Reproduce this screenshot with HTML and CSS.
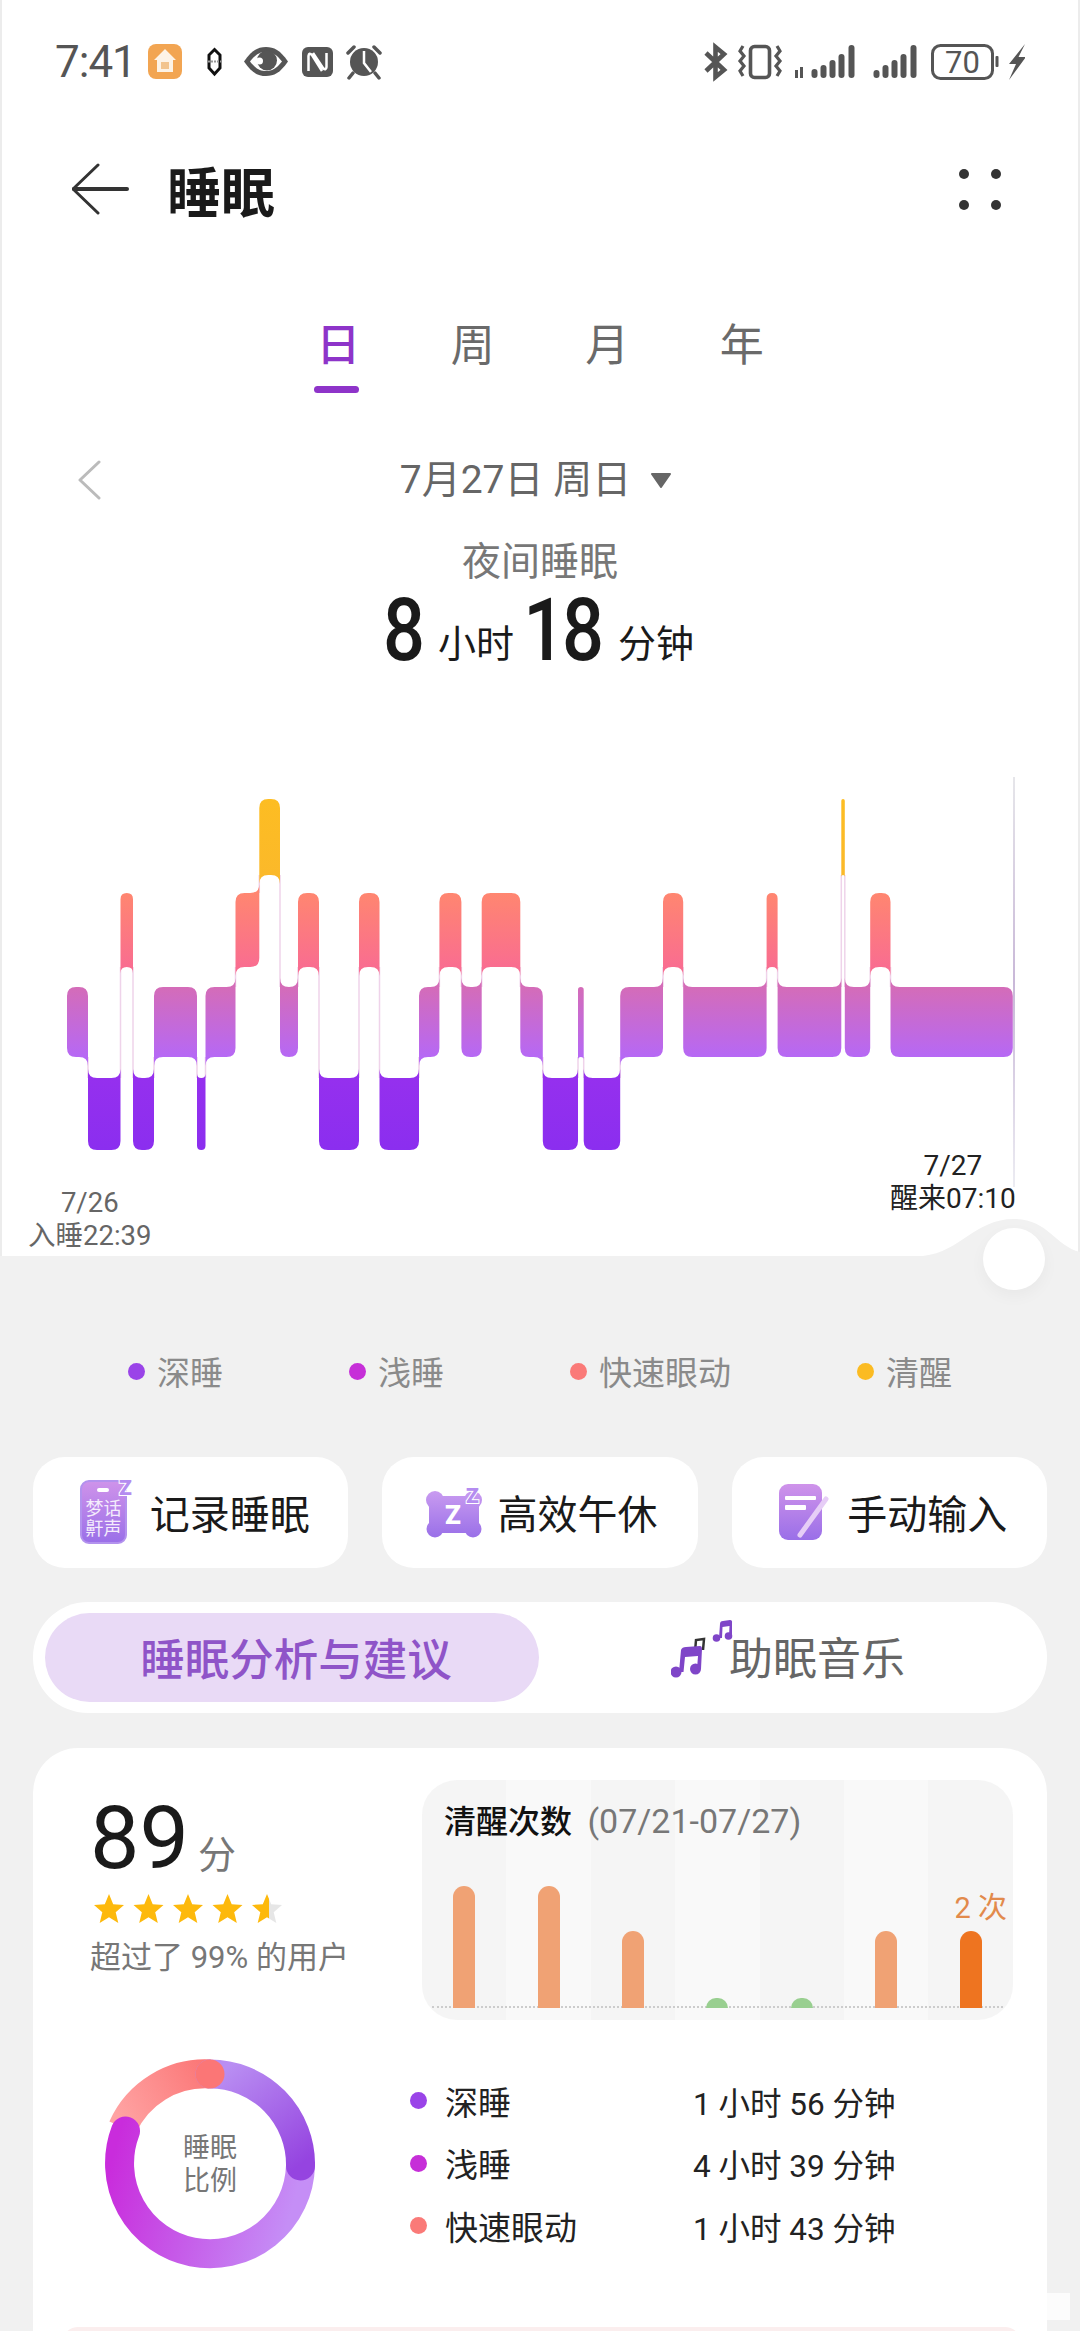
FILE: index.html
```html
<!DOCTYPE html>
<html lang="zh">

<head>
    <meta charset="utf-8">
    <title>睡眠</title>
    <link rel="stylesheet" href="styles.css">
</head>

<body>
    <div class="sheet">
        <div class="statusbar">
            <div class="status-left">
                <span class="clock">7:41</span>
                <svg class="status-icons-left" viewBox="148 40 234 44" width="234" height="44">
                    <!-- home app -->
                    <rect x="148" y="44" width="34" height="35" rx="8" fill="#f2a552" />
                    <path d="M165 49 L176 60 H173 V72 H157 V60 H154 Z" fill="#fdf3e6" />
                    <path d="M161 62 h8 v7 h-8 Z" fill="#f2c48e" />
                    <!-- link -->
                    <path d="M214.5 49.5 L220 55 V68 L214.5 74 L209 68 V55 Z" fill="#fff" stroke="#111" stroke-width="3" />
                    <path d="M208 61.5 H221" stroke="#999" stroke-width="2" stroke-dasharray="2 1" />
                    <!-- eye -->
                    <path d="M244 61.5 C252 50 258 47 266 47 C274 47 280 50 288 61.5 C280 73 274 76 266 76 C258 76 252 73 244 61.5Z" fill="#555" />
                    <path d="M250 61.5 C256 54 260 52 266 52 C272 52 276 54 282 61.5 C276 69 272 71 266 71 C260 71 256 69 250 61.5Z" fill="#fff" />
                    <circle cx="267" cy="60.5" r="10" fill="#555" />
                    <circle cx="259.5" cy="61" r="3.5" fill="#fff" />
                    <!-- nfc -->
                    <rect x="302" y="47" width="31" height="30" rx="6" fill="#555" />
                    <path d="M308.5 71 V56 Q309 52 312 55 L322 71 M313 53 L323 68 Q326 71 326.5 67 V53" fill="none" stroke="#fff" stroke-width="2.5" />
                    <!-- alarm -->
                    <circle cx="364" cy="62" r="14" fill="#555" />
                    <path d="M348 53 L354 47 M380 53 L374 47 M353 73 L349 78 M375 73 L379 78" stroke="#555" stroke-width="3.5" stroke-linecap="round" />
                    <path d="M364 51 V63 L371 72" fill="none" stroke="#fff" stroke-width="2.5" />
                </svg>
            </div>
            <svg class="status-icons-right" viewBox="704 40 321 44" width="321" height="44">
                <!-- bluetooth -->
                <path d="M706 53 L724 70 L715.5 77 V47 L724 54 L706 71" fill="none" stroke="#555" stroke-width="4.6" />
                <!-- vibrate -->
                <rect x="750.5" y="46.5" width="19" height="31" rx="4" fill="none" stroke="#555" stroke-width="3.6" />
                <path d="M743 46 L740 51 L744 56 L740 61 L744 66 L740 71 L743 76 M777 46 L780 51 L776 56 L780 61 L776 66 L780 71 L777 76" fill="none" stroke="#555" stroke-width="3.2" />
                <!-- signal 1 -->
                <g fill="#555">
                    <rect x="795" y="70" width="3" height="8" />
                    <rect x="800" y="67" width="3" height="11" />
                    <rect x="811.5" y="69" width="6" height="9" rx="3" />
                    <rect x="820.5" y="65" width="6" height="13" rx="3" />
                    <rect x="829.5" y="60" width="6" height="18" rx="3" />
                    <rect x="838.5" y="54" width="6" height="24" rx="3" />
                    <rect x="848.5" y="45" width="6" height="33" rx="3" />
                    <!-- signal 2 -->
                    <rect x="873.5" y="70" width="6" height="8" rx="3" />
                    <rect x="882.5" y="65" width="6" height="13" rx="3" />
                    <rect x="891.5" y="60" width="6" height="18" rx="3" />
                    <rect x="900.5" y="54" width="6" height="24" rx="3" />
                    <rect x="910.5" y="45" width="6" height="33" rx="3" />
                </g>
                <!-- battery -->
                <rect x="932.5" y="45.5" width="60" height="33" rx="8" fill="none" stroke="#555" stroke-width="3" />
                <text x="962.5" y="73" class="battery-text">70</text>
                <rect x="995.5" y="56" width="3" height="11" rx="1" fill="#555" />
                <path d="M1025 44 L1009 64 H1016 L1009 80 L1026 57 H1018.5 Z" fill="#555" />
            </svg>
        </div>

        <div class="appbar">
            <svg class="back-icon" viewBox="72 163 58 52" width="58" height="52">
                <path d="M98 165 L73 189 L98 213" fill="none" stroke="#333" stroke-width="3" stroke-linecap="round" stroke-linejoin="round" />
                <path d="M74 189 H127" stroke="#333" stroke-width="4" stroke-linecap="round" />
            </svg>
            <h1 class="page-title">睡眠</h1>
            <div class="more-dots"><i></i><i></i><i></i><i></i></div>
        </div>

        <div class="range-tabs">
            <div class="range-tab active">日</div>
            <div class="range-tab">周</div>
            <div class="range-tab">月</div>
            <div class="range-tab">年</div>
        </div>

        <div class="date-row">
            <svg class="date-prev" viewBox="0 0 26 40" width="26" height="40">
                <path d="M23 2 L4 20 L23 38" fill="none" stroke="#bbb" stroke-width="3" stroke-linecap="round" stroke-linejoin="round" />
            </svg>
            <div class="date-text">
                <span>7月27日 周日</span>
                <svg class="date-caret" viewBox="0 0 22 16" width="22" height="16">
                    <path d="M2 2 H20 L11 15 Z" fill="#666" stroke="#666" stroke-width="2" stroke-linejoin="round" />
                </svg>
            </div>
            <div></div>
        </div>

        <div class="summary-label">夜间睡眠</div>
        <div class="summary-value">
            <span class="dur-num">8</span><span class="dur-unit">小时</span><span class="dur-num dur-two">18</span><span class="dur-unit">分钟</span>
        </div>

        <div class="chart">
            <svg id="sleep-chart" class="chart-svg" viewBox="0 676 1080 580" width="1080" height="580">
                <defs>
                    <linearGradient id="lv-awake" gradientUnits="userSpaceOnUse" x1="0" y1="799" x2="0" y2="875">
                        <stop offset="0" stop-color="#fdbd22" />
                        <stop offset="1" stop-color="#fbb92a" />
                    </linearGradient>
                    <linearGradient id="lv-rem" gradientUnits="userSpaceOnUse" x1="0" y1="893" x2="0" y2="967">
                        <stop offset="0" stop-color="#ff8670" />
                        <stop offset="1" stop-color="#f96d90" />
                    </linearGradient>
                    <linearGradient id="lv-light" gradientUnits="userSpaceOnUse" x1="0" y1="987" x2="0" y2="1057">
                        <stop offset="0" stop-color="#d46cb8" />
                        <stop offset="1" stop-color="#b668f5" />
                    </linearGradient>
                    <linearGradient id="lv-deep" gradientUnits="userSpaceOnUse" x1="0" y1="1078" x2="0" y2="1150">
                        <stop offset="0" stop-color="#9530ee" />
                        <stop offset="1" stop-color="#8b2eef" />
                    </linearGradient>
                    <linearGradient id="axis-line" x1="0" y1="0" x2="0" y2="1">
                        <stop offset="0" stop-color="#e6e6ea" />
                        <stop offset=".5" stop-color="#c9b8d8" />
                        <stop offset="1" stop-color="#ececf2" />
                    </linearGradient>
                </defs>
                <rect x="1013" y="777" width="2" height="410" fill="url(#axis-line)" />
                <g id="sleep-blocks"></g>
                <path d="M915 1256.5 C960 1256 972 1219 1014 1219 C1048 1219 1055 1246 1080 1252 V1257 H915 Z" fill="#f1f1f1" />
            </svg>
            <div class="chart-label chart-start">7/26<br>入睡22:39</div>
            <div class="chart-label chart-end">7/27<br>醒来07:10</div>
            <div class="chart-thumb"></div>
        </div>
    </div>

    <div class="legend">
        <div class="legend-item"><i class="dot dot-deep"></i>深睡</div>
        <div class="legend-item"><i class="dot dot-light"></i>浅睡</div>
        <div class="legend-item"><i class="dot dot-rem"></i>快速眼动</div>
        <div class="legend-item"><i class="dot dot-awake"></i>清醒</div>
    </div>

    <div class="actions">
        <div class="action-btn action-record">
            <svg viewBox="80 1480 54 66" width="54" height="66">
                <defs>
                    <linearGradient id="ic-purple" x1="0" y1="0" x2="0" y2="1">
                        <stop offset="0" stop-color="#cf93ea" />
                        <stop offset="1" stop-color="#9a6fe8" />
                    </linearGradient>
                    <linearGradient id="ic-pillow" gradientUnits="userSpaceOnUse" x1="0" y1="1492" x2="0" y2="1537">
                        <stop offset="0" stop-color="#c89af0" />
                        <stop offset="1" stop-color="#9a70e8" />
                    </linearGradient>
                </defs>
                <rect x="81" y="1482" width="45" height="62" rx="8" fill="url(#ic-purple)" stroke="#b392ee" stroke-width="2" />
                <rect x="97" y="1489" width="12" height="4" rx="2" fill="#fff" />
                <text x="103.5" y="1516" class="icon-text">梦话</text>
                <text x="103.5" y="1536" class="icon-text">鼾声</text>
                <text x="125.5" y="1496" class="icon-z" stroke="#fff" stroke-width="2" paint-order="stroke">Z</text>
            </svg>
            <span>记录睡眠</span>
        </div>
        <div class="action-btn action-pillow">
            <svg viewBox="428 1486 56 52" width="56" height="52">
                <g fill="url(#ic-pillow)">
                    <rect x="431" y="1496" width="50" height="37" rx="8" />
                    <circle cx="437" cy="1500" r="9" />
                    <circle cx="475" cy="1500" r="9" />
                    <circle cx="437" cy="1529" r="8.5" />
                    <circle cx="475" cy="1529" r="8.5" />
                </g>
                <text x="455" y="1524" class="icon-z-big">Z</text>
                <text x="474.5" y="1503" class="icon-z" stroke="#fff" stroke-width="2" paint-order="stroke">Z</text>
            </svg>
            <span>高效午休</span>
        </div>
        <div class="action-btn action-manual">
            <svg viewBox="782 1484 50 58" width="50" height="58">
                <rect x="782" y="1485" width="43" height="56" rx="9" fill="url(#ic-purple)" />
                <rect x="788" y="1497" width="31" height="4" rx="1" fill="#fff" />
                <rect x="788" y="1506" width="21" height="5" rx="1" fill="#fff" />
                <path d="M829 1500 L803 1536" stroke="#e6cdf6" stroke-width="5" stroke-linecap="round" />
            </svg>
            <span>手动输入</span>
        </div>
    </div>

    <div class="mode-tabs">
        <div class="mode-tab active">睡眠分析与建议</div>
        <div class="mode-tab">
            <svg class="music-icon" viewBox="672 1614 62 60" width="62" height="60">
                <path d="M696 1648 L697 1636 L705 1635 L704 1646" fill="none" stroke="#333" stroke-width="2.5" />
                <g fill="#7f45c8">
                    <circle cx="677" cy="1668" r="5.5" />
                    <circle cx="696.5" cy="1665" r="5.5" />
                    <path d="M680 1668 L682 1646 Q683 1643 687 1643 L701 1642 Q703 1642 703 1645 L702 1665 H698 L699 1652 L686 1653 L684.5 1668 Z" />
                    <circle cx="717.5" cy="1634" r="3.8" />
                    <circle cx="729.5" cy="1632" r="3.8" />
                    <path d="M720 1634 L721 1620 Q721 1617 724 1617 L731 1616 Q733.5 1616 733 1619 L733 1632 H730 L730.5 1622 L723.5 1623 L723 1634 Z" />
                </g>
            </svg>
            <span>助眠音乐</span>
        </div>
    </div>

    <div class="card">
        <div class="card-top">
            <div class="score">
                <div class="score-value"><span class="score-num">89</span><span class="score-unit">分</span></div>
                <svg class="score-stars" viewBox="0 0 188 30" width="188" height="30">
                    <defs>
                        <path id="star" d="M15 0 L19.2 10.2 L30 11 L21.7 18.2 L24.3 29 L15 23.2 L5.7 29 L8.3 18.2 L0 11 L10.8 10.2 Z" />
                        <linearGradient id="star-part" x1="0" y1="0" x2="1" y2="0">
                            <stop offset=".58" stop-color="#fdb90c" />
                            <stop offset=".58" stop-color="#e6e6e6" />
                        </linearGradient>
                    </defs>
                    <use href="#star" x="0" fill="#fdb90c" />
                    <use href="#star" x="39.5" fill="#fdb90c" />
                    <use href="#star" x="79" fill="#fdb90c" />
                    <use href="#star" x="118.5" fill="#fdb90c" />
                    <use href="#star" x="158" fill="url(#star-part)" />
                </svg>
                <div class="score-note">超过了 99% 的用户</div>
            </div>
            <div class="wake-panel">
                <div class="wake-title"><b>清醒次数</b> (07/21-07/27)</div>
                <div class="wake-base"></div>
                <div class="wake-count">2 次</div>
                <div class="wake-bars">
                    <div class="wake-col"><i class="wake-bar" style="height:122px"></i></div>
                    <div class="wake-col"><i class="wake-bar" style="height:122px"></i></div>
                    <div class="wake-col"><i class="wake-bar" style="height:77px"></i></div>
                    <div class="wake-col"><i class="wake-bar good" style="height:10px"></i></div>
                    <div class="wake-col"><i class="wake-bar good" style="height:10px"></i></div>
                    <div class="wake-col"><i class="wake-bar" style="height:77px"></i></div>
                    <div class="wake-col"><i class="wake-bar today" style="height:77px"></i></div>
                </div>
            </div>
        </div>

        <div class="ratio">
            <div class="donut">
                <svg viewBox="105 2059 210 211" width="210" height="211">
                    <defs>
                        <linearGradient id="arc-deep" gradientUnits="userSpaceOnUse" x1="225" y1="2070" x2="300" y2="2165">
                            <stop offset="0" stop-color="#b98ef2" />
                            <stop offset="1" stop-color="#9544e0" />
                        </linearGradient>
                        <linearGradient id="arc-light" gradientUnits="userSpaceOnUse" x1="300" y1="2180" x2="120" y2="2130">
                            <stop offset="0" stop-color="#c58ef6" />
                            <stop offset=".55" stop-color="#c658e8" />
                            <stop offset="1" stop-color="#c92cdc" />
                        </linearGradient>
                        <linearGradient id="arc-rem" gradientUnits="userSpaceOnUse" x1="125" y1="2130" x2="215" y2="2080">
                            <stop offset="0" stop-color="#ffa3a3" />
                            <stop offset="1" stop-color="#fb7676" />
                        </linearGradient>
                    </defs>
                    <path d="M122.6 2127.4 A90.5 90.5 0 0 1 210 2074" fill="none" stroke="url(#arc-rem)" stroke-width="29" />
                    <path d="M300.5 2166 A90.5 90.5 0 1 1 125.5 2131" fill="none" stroke="url(#arc-light)" stroke-width="29" stroke-linecap="round" />
                    <path d="M210 2074 A90.5 90.5 0 0 1 300.5 2166" fill="none" stroke="url(#arc-deep)" stroke-width="29" stroke-linecap="round" />
                    <circle cx="210" cy="2074" r="14.5" fill="#fb7676" />
                </svg>
                <div class="donut-label">睡眠<br>比例</div>
            </div>
            <div class="ratio-rows">
                <i class="dot dot-deep"></i><span>深睡</span><span class="ratio-time">1 小时 56 分钟</span>
                <i class="dot dot-light"></i><span>浅睡</span><span class="ratio-time">4 小时 39 分钟</span>
                <i class="dot dot-rem"></i><span>快速眼动</span><span class="ratio-time">1 小时 43 分钟</span>
            </div>
        </div>

        <div class="tip-bar"></div>
    </div>

    <div class="mark"></div>

    <script src="chart.js"></script>
</body>

</html>
```

FILE: styles.css
```css
* {
    box-sizing: border-box;
}

body {
    margin: 0;
    width: 1080px;
    height: 2331px;
    overflow: hidden;
    position: relative;
    background: #f1f1f1;
    color: #222;
    font-family: Roboto, "Noto Sans CJK SC", sans-serif;
}

i {
    display: block;
}

/* white top part */
.sheet {
    height: 1256px;
    background: #fff;
    box-shadow: inset 2px 0 #ececec, inset -2px 0 #ececec;
}

.statusbar {
    height: 124px;
    padding: 0 55px 0 55px;
    display: flex;
    align-items: center;
    justify-content: space-between;
}

.status-left {
    display: flex;
    align-items: center;
    gap: 15px;
}

.clock {
    font-size: 44px;
    letter-spacing: -1px;
    color: #555;
    width: 78px;
}

.battery-text {
    font-size: 31px;
    fill: #555;
    text-anchor: middle;
}

.appbar {
    height: 130px;
    padding: 0 79px 0 72px;
    display: flex;
    align-items: center;
}

.page-title {
    margin: 0 0 0 37px;
    font-size: 54px;
    font-weight: 700;
    color: #1a1a1a;
    flex: 1;
}

.more-dots {
    display: grid;
    grid-template-columns: 10px 10px;
    gap: 21px 22.5px;
}

.more-dots i {
    width: 10px;
    height: 10px;
    border-radius: 50%;
    background: #333;
}

.range-tabs {
    margin-top: 62px;
    height: 77px;
    display: grid;
    grid-template-columns: repeat(4, 134.5px);
    justify-content: center;
}

.range-tab {
    font-size: 44px;
    line-height: 60px;
    text-align: center;
    color: #6a6a6a;
}

.range-tab.active {
    color: #8e34c9;
    font-weight: 500;
}

.range-tab.active::after {
    content: "";
    display: block;
    width: 45px;
    height: 7px;
    margin: 10px auto 0 43px;
    border-radius: 4px;
    background: #8e34c9;
}

.date-row {
    margin-top: 62px;
    height: 50px;
    display: grid;
    grid-template-columns: 1fr auto 1fr;
    align-items: center;
}

.date-prev {
    margin-left: 76px;
}

.date-text {
    padding-right: 8px;
    font-size: 39px;
    line-height: 50px;
    color: #666;
    display: flex;
    align-items: center;
    gap: 19px;
    white-space: nowrap;
}

.summary-label {
    margin-top: 35px;
    font-size: 39px;
    line-height: 44px;
    text-align: center;
    color: #777;
}

.summary-value {
    height: 92px;
    display: flex;
    justify-content: center;
    align-items: baseline;
    color: #1a1a1a;
}

.dur-num {
    font-size: 88px;
    line-height: 92px;
    font-weight: 500;
    transform: scaleX(.84);
    margin: 0 -2px 0 -1px;
}

.dur-two {
    margin: 0 -1px 0 -4px;
    letter-spacing: -4px;
}

.dur-unit {
    font-size: 38px;
    margin: 0 6px 0 11px;
    transform: translateY(-3px);
}

.chart {
    position: relative;
    height: 580px;
}

.chart-svg {
    display: block;
}

.chart-label {
    position: absolute;
    font-size: 28px;
    line-height: 33px;
    text-align: center;
}

.chart-start {
    left: 28px;
    top: 510px;
    color: #666;
    font-size: 27.5px;
}

.chart-end {
    left: 890px;
    top: 473px;
    color: #222;
}

.chart-thumb {
    position: absolute;
    left: 983px;
    top: 552px;
    width: 62px;
    height: 62px;
    border-radius: 50%;
    background: #fff;
    box-shadow: 0 6px 16px rgba(0, 0, 0, .04);
}

/* legend */
.legend {
    margin-top: 90px;
    height: 50px;
    display: flex;
    justify-content: center;
    gap: 126px;
}

.legend-item {
    display: flex;
    align-items: center;
    gap: 12px;
    font-size: 33px;
    color: #8a8a8a;
}

.dot {
    width: 17px;
    height: 17px;
    border-radius: 50%;
}

.dot-deep {
    background: #9a44e8;
}

.dot-light {
    background: #c62fd8;
}

.dot-rem {
    background: #fa7a78;
}

.dot-awake {
    background: #fbbb22;
}

/* buttons */
.actions {
    margin: 61px 33px 0;
    display: grid;
    grid-template-columns: repeat(3, 1fr);
    gap: 34px;
}

.action-btn {
    height: 111px;
    padding-bottom: 2px;
    border-radius: 32px;
    background: #fff;
    display: flex;
    align-items: center;
    justify-content: center;
    gap: 20px;
    font-size: 40px;
    color: #1a1a1a;
}

.action-btn svg {
    overflow: visible;
}

.action-record {
    gap: 16px;
    padding-left: 8px;
}

.action-pillow {
    gap: 15px;
    padding-left: 4px;
}

.action-manual {
    gap: 18px;
    padding-left: 8px;
}

.icon-text {
    font-size: 18px;
    fill: #f4ecfc;
    text-anchor: middle;
}

.icon-z {
    font-family: Roboto, sans-serif;
    font-size: 21px;
    font-weight: 900;
    fill: #b48cf0;
    text-anchor: middle;
}

.icon-z-big {
    font-family: Roboto, sans-serif;
    font-size: 26px;
    font-weight: 900;
    fill: #fff;
    text-anchor: middle;
}

.mode-tabs {
    margin: 34px 33px 0;
    height: 111px;
    padding: 11px 12px;
    border-radius: 55px;
    background: #fff;
    display: grid;
    grid-template-columns: 494px 1fr;
}

.mode-tab {
    padding-bottom: 3px;
    border-radius: 45px;
    display: flex;
    align-items: center;
    justify-content: center;
    font-size: 44px;
    color: #666;
}

.mode-tab.active {
    background: #e9daf6;
    color: #8f54c8;
    font-size: 44.5px;
    font-weight: 500;
    padding-left: 8px;
}

.music-icon {
    margin: -16px -4px 0 2px;
}

/* analysis card */
.card {
    margin: 35px 33px 0;
    height: 640px;
    padding-top: 32px;
    border-radius: 45px 45px 0 0;
    background: #fff;
}

.card-top {
    display: grid;
    grid-template-columns: 389px 591px;
}

.score {
    padding: 18px 0 0 57px;
}

.score-value {
    display: flex;
    align-items: baseline;
    gap: 9px;
    height: 80px;
}

.score-num {
    font-size: 88px;
    line-height: 80px;
    color: #1a1a1a;
}

.score-unit {
    font-size: 38px;
    color: #777;
}

.score-stars {
    display: block;
    margin: 16px 0 0 4px;
}

.score-note {
    margin-top: 14px;
    font-size: 31px;
    line-height: 40px;
    color: #777;
    white-space: nowrap;
}

.wake-panel {
    position: relative;
    height: 240px;
    border-radius: 35px;
    overflow: hidden;
    background: repeating-linear-gradient(90deg, #f5f5f5 0 84.4px, #f9f9f9 84.4px 168.8px);
}

.wake-title {
    position: absolute;
    left: 22px;
    top: 20px;
    font-size: 34px;
    line-height: 42px;
    color: #777;
    white-space: nowrap;
}

.wake-title b {
    font-size: 32px;
    font-weight: 500;
    color: #111;
    margin-right: 7px;
}

.wake-base {
    position: absolute;
    left: 10px;
    right: 10px;
    bottom: 12px;
    border-top: 2px dotted #ccc;
}

.wake-count {
    position: absolute;
    right: 6px;
    top: 110px;
    font-size: 29px;
    line-height: 36px;
    color: #e28a4c;
}

.wake-bars {
    position: absolute;
    left: 0;
    right: 0;
    bottom: 12px;
    display: grid;
    grid-template-columns: repeat(7, 1fr);
    align-items: end;
}

.wake-col {
    display: flex;
    justify-content: center;
}

.wake-bar {
    width: 22px;
    border-radius: 11px 11px 0 0;
    background: #f0a274;
}

.wake-bar.good {
    background: #99cf90;
}

.wake-bar.today {
    background: #ee7420;
}

.ratio {
    margin: 39px 0 0 72px;
    display: flex;
    align-items: center;
    gap: 95px;
}

.donut {
    position: relative;
    width: 210px;
    height: 211px;
}

.donut svg {
    display: block;
}

.donut-label {
    position: absolute;
    inset: 0;
    display: flex;
    align-items: center;
    justify-content: center;
    text-align: center;
    font-size: 27px;
    line-height: 33px;
    color: #777;
}

.ratio-rows {
    padding-bottom: 3px;
    display: grid;
    grid-template-columns: 18px 231px auto;
    grid-auto-rows: 62.5px;
    column-gap: 17px;
    align-items: center;
    font-size: 33px;
    color: #222;
}

.ratio-time {
    font-size: 31.5px;
}

.tip-bar {
    margin: 57px 26px 0 29px;
    height: 20px;
    border-radius: 16px 16px 0 0;
    background: #fbeeee;
}

/* faint watermark remains at the bottom right */
.mark {
    position: absolute;
    left: 1046px;
    top: 2293px;
    width: 24px;
    height: 27px;
    background: rgba(255, 255, 255, .75);
}
```

FILE: chart.js
```js
// sleep stages of the night, left to right: [level, x where the block ends]
var LEVELS = {
    awake: { top: 799, bottom: 875, rank: 3 },
    rem: { top: 893, bottom: 967, rank: 2 },
    light: { top: 987, bottom: 1057, rank: 1 },
    deep: { top: 1078, bottom: 1150, rank: 0 }
};

var START_X = 67;
var STAGES = [
    ["light", 88], ["deep", 120.5], ["rem", 133], ["deep", 154], ["light", 197],
    ["deep", 205.5], ["light", 235.5], ["rem", 259.3], ["awake", 280], ["light", 298],
    ["rem", 319], ["deep", 359], ["rem", 379.5], ["deep", 419], ["light", 439.4],
    ["rem", 461.4], ["light", 481.7], ["rem", 520.3], ["light", 542.8], ["deep", 578],
    ["light", 583.7], ["deep", 620.2], ["light", 663], ["rem", 683.2], ["light", 766.6],
    ["rem", 777.6], ["light", 841.3], ["awake", 844.8], ["light", 870.2], ["rem", 890.5],
    ["light", 1012.8]
];

// builds one block. A corner next to a higher/lower neighbour flares out instead of rounding
function blockPath(x0, x1, lv, prev, next) {
    var r = Math.min(9, (x1 - x0) / 2);
    var top = lv.top, bot = lv.bottom;
    var tl = prev && prev.rank > lv.rank ? top - r : top + r;
    var tr = next && next.rank > lv.rank ? top - r : top + r;
    var br = next && next.rank < lv.rank ? bot + r : bot - r;
    var bl = prev && prev.rank < lv.rank ? bot + r : bot - r;
    return "M" + x0 + " " + tl +
        " Q" + x0 + " " + top + " " + (x0 + r) + " " + top +
        " L" + (x1 - r) + " " + top +
        " Q" + x1 + " " + top + " " + x1 + " " + tr +
        " L" + x1 + " " + br +
        " Q" + x1 + " " + bot + " " + (x1 - r) + " " + bot +
        " L" + (x0 + r) + " " + bot +
        " Q" + x0 + " " + bot + " " + x0 + " " + bl + " Z";
}

function addNode(parent, name, attrs) {
    var node = document.createElementNS("http://www.w3.org/2000/svg", name);
    for (var key in attrs) {
        node.setAttribute(key, attrs[key]);
    }
    parent.appendChild(node);
}

function drawChart() {
    var group = document.getElementById("sleep-blocks");
    var x = START_X;
    for (var i = 0; i < STAGES.length; i++) {
        var name = STAGES[i][0];
        var end = STAGES[i][1];
        var lv = LEVELS[name];
        var prev = i > 0 ? LEVELS[STAGES[i - 1][0]] : null;
        var next = i < STAGES.length - 1 ? LEVELS[STAGES[i + 1][0]] : null;

        // thin pale line that joins this block to the next one
        if (next) {
            var y1 = Math.min(lv.bottom, next.bottom);
            var y2 = Math.max(lv.top, next.top);
            addNode(group, "path", {
                d: "M" + end + " " + y1 + " V" + y2,
                stroke: "#efd3ea",
                "stroke-width": 1.5
            });
        }
        addNode(group, "path", {
            d: blockPath(x, end, lv, prev, next),
            fill: "url(#lv-" + name + ")"
        });
        x = end;
    }
}

drawChart();
```
